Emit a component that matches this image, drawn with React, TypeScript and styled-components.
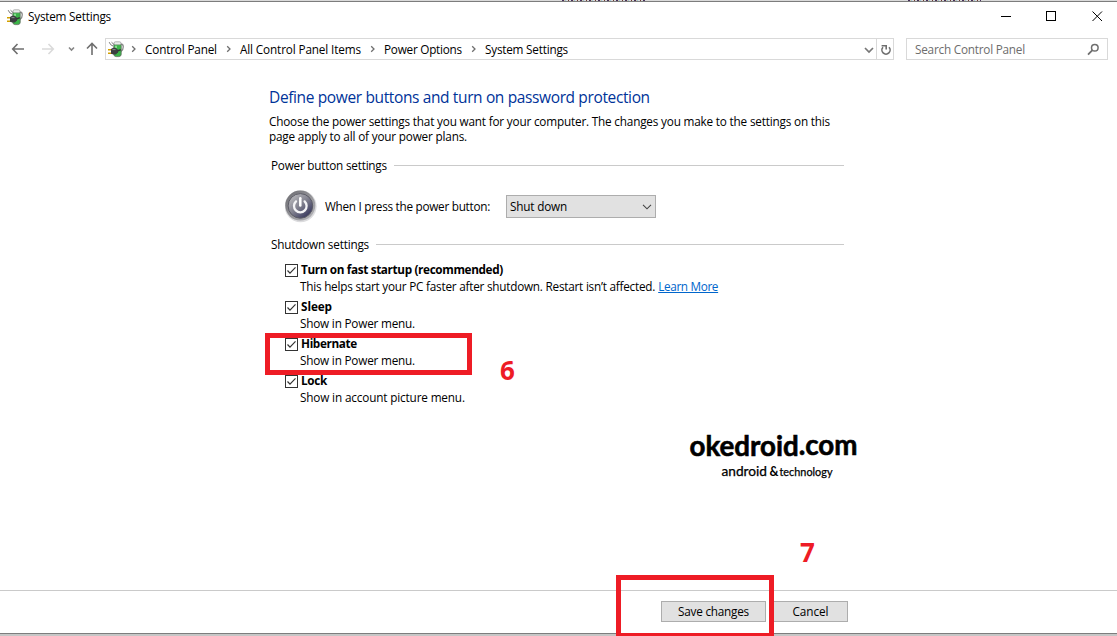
import React from "react";
import styled, {createGlobalStyle} from "styled-components";

const GlobalStyle = createGlobalStyle`
  * {
    box-sizing: border-box;
  }

  body {
    margin: 0;
    background: #fff;
    color: #000;
    font-family: "Open Sans", "Noto Sans", sans-serif;
    font-size: 11.75px;
  }
`

const Window = styled.div`
  position: relative;
  display: flex;
  flex-direction: column;
  width: 1117px;
  height: 636px;
  overflow: hidden;
  background: #fff;
`

const TopEdge = styled.div`
  flex: none;
  display: flex;
  height: 2px;
  padding-left: 562px;
  gap: 263px;
  background: #dadada;
  border-bottom: 1px solid #7d7d7d;
`

// bottoms of the letters of the window behind
const Sliver = styled.div<{ $width: number }>`
  width: ${({$width}) => $width}px;
  height: 1px;
  background: repeating-linear-gradient(90deg, #46305c 0 2px, #d8c8a8 2px 3px, #9cc4dc 3px 4px, #dadada 4px 6px, #703c30 6px 7px, #dadada 7px 9px);
`

const Text = styled.span<{ $ls?: number }>`
  white-space: pre;
  letter-spacing: ${({$ls}) => $ls ?? -0.2}px;
`

const TitleBar = styled.header`
  flex: none;
  display: flex;
  align-items: center;
  height: 30px;
  padding-left: 7px;
`

const TitleText = styled(Text)`
  flex: 1;
  margin-left: 4px;
  padding-bottom: 2px;
`

const WindowButtons = styled.div`
  display: flex;
  margin-right: -1px;

  svg {
    display: block;
    width: 46px;
    height: 28px;
    fill: none;
    stroke: #000;
  }
`

const NavBar = styled.nav`
  flex: none;
  display: flex;
  align-items: center;
  height: 22px;
  margin-top: 6px;
  padding-right: 9px;
`

const NavArrows = styled.div`
  width: 105px;
  height: 22px;
`

const AddressBar = styled.div`
  display: flex;
  align-items: center;
  width: 789px;
  height: 22px;
  padding-left: 2px;
  border: 1px solid #d9d9d9;
`

const Crumb = styled.div<{ $width: number }>`
  display: flex;
  align-items: center;
  width: ${({$width}) => $width}px;

  svg {
    flex: none;
    margin-right: 8px;
  }

  span {
    padding-bottom: 1px;
  }
`

const AddressTools = styled.div`
  display: flex;
  margin-left: auto;
`

const SearchBox = styled.div`
  display: flex;
  align-items: center;
  justify-content: space-between;
  width: 202px;
  height: 22px;
  margin-left: 12px;
  padding: 0 7px 0 8px;
  border: 1px solid #d9d9d9;
  color: #6d6d6d;

  span {
    padding-bottom: 1px;
  }
`

const Content = styled.main`
  width: 575px;
  margin: 27px 0 0 269px;
`

const Heading = styled.h1`
  margin: 0;
  color: #003399;
  font-size: 15.5px;
  font-weight: 400;
  line-height: 20px;
`

const Intro = styled.p`
  display: flex;
  flex-direction: column;
  margin: 7px 0 0;
  line-height: 15px;
`

const GroupTitle = styled.div`
  display: flex;
  align-items: center;
  height: 16px;
  margin-top: 14px;
  padding-left: 2px;

  span {
    padding-bottom: 2px;
  }

  &::after {
    content: "";
    flex: 1;
    height: 1px;
    margin: 0 0 1px 7px;
    background: #cacaca;
  }
`

const PowerRow = styled.div`
  display: flex;
  align-items: center;
  height: 34px;
  margin-top: 15px;
  padding-left: 16px;
`

const PowerLabel = styled(Text)`
  width: 181px;
  margin-left: 6px;
  padding-bottom: 1px;
`

const Select = styled.div`
  display: flex;
  align-items: center;
  justify-content: space-between;
  width: 150px;
  height: 23px;
  margin-top: 1px;
  padding: 0 3px;
  border: 1px solid #adadad;
  background: #e1e1e1;

  span {
    padding-bottom: 1px;
  }
`

const Options = styled.div`
  display: flex;
  flex-direction: column;
  gap: 3px;
  margin: 8px 0 0 16px;
`

const Option = styled.div`
  display: grid;
  grid-template-columns: 15px auto;
  line-height: 17px;

  svg {
    margin-top: 3px;
  }
`

const OptionTitle = styled(Text)`
  padding-left: 1px;
  font-weight: 700;
`

const OptionNote = styled.div`
  grid-column: 2;
`

const Link = styled.a`
  margin-left: 3px;
  color: #0066cc;
  letter-spacing: -0.34px;
  text-decoration: underline;
`

const Footer = styled.footer`
  display: flex;
  justify-content: flex-end;
  gap: 7px;
  height: 43px;
  margin-top: auto;
  padding: 10px 269px 0 0;
  border-top: 1px solid #cacaca;
`

const Button = styled.button<{ $width: number }>`
  width: ${({$width}) => $width}px;
  height: 21px;
  padding: 0;
  border: 1px solid #adadad;
  background: #e1e1e1;
  color: #000;
  font: inherit;
  line-height: 17px;
`

const BottomEdge = styled.div`
  flex: none;
  height: 3px;
  border-top: 1px solid #7d7d7d;
  background: #c6c6c6;
`

const Marker = styled.div<{ $x: number, $y: number, $w: number, $h: number }>`
  position: absolute;
  left: ${({$x}) => $x}px;
  top: ${({$y}) => $y}px;
  width: ${({$w}) => $w}px;
  height: ${({$h}) => $h}px;
  border: 5px solid #ee1c25;
`

const Step = styled.div<{ $x: number, $y: number }>`
  position: absolute;
  left: ${({$x}) => $x}px;
  top: ${({$y}) => $y}px;
  color: #ee1c25;
  font-size: 26px;
  font-weight: 700;
  line-height: 30px;
`

const Watermark = styled.svg`
  position: absolute;
  left: 686px;
  top: 426px;
  font-family: Lato, sans-serif;
`

const PlugIcon = () => (
    <svg width="17" height="17" viewBox="0 0 17 17">
        <path d="M1.2 1.2Q2.5 4.5 5 5M3.5 1.2L6 3.5" stroke="#777" strokeWidth="1" fill="none"/>
        <path d="M12.5 3C16.3 3 16 8 13 10.5" stroke="#8b8b8b" strokeWidth="1.3" fill="none"/>
        <rect x="5.8" y="2" width="7.4" height="13.6" rx="2.4" fill="#3bb548" stroke="#5d6a5d" strokeWidth=".8"/>
        <rect x="6" y=".8" width="7" height="3" rx="1.4" fill="#e8ece8" stroke="#888" strokeWidth=".6"/>
        <path d="M8 4.8V7" stroke="#a5eeaa" strokeWidth="1.4"/>
        <path d="M0 8.8H4M0 12.2H4" stroke="#d2a000" strokeWidth="1.6"/>
        <path d="M3 8L5 6.8H7.5L10 8.8V11.2L8 13.4H5.5L3 12.8Z" fill="#3c3e40"/>
        <path d="M4.5 8.6H7.5" stroke="#85888a"/>
        <path d="M9.5 10L12.8 8.6" stroke="#333" strokeWidth="1.5"/>
    </svg>
)

const PowerIcon = () => (
    <svg width="34" height="34" viewBox="0 0 34 34">
        <defs>
            <linearGradient id="rim" x1="0" y1="0" x2="1" y2="1">
                <stop offset="0" stopColor="#6b6b70"/>
                <stop offset="1" stopColor="#b9b9bd"/>
            </linearGradient>
            <linearGradient id="face" x1=".1" y1=".1" x2=".8" y2=".9">
                <stop offset="0" stopColor="#b9b9bc"/>
                <stop offset=".5" stopColor="#838390"/>
                <stop offset="1" stopColor="#3b3b60"/>
            </linearGradient>
        </defs>
        <circle cx="15.6" cy="17.2" r="16" fill="#dcdcde"/>
        <circle cx="15.3" cy="16.6" r="15" fill="url(#rim)"/>
        <circle cx="15.4" cy="16.9" r="12.3" fill="url(#face)" stroke="#5c5c66"/>
        <path d="M11 12.4A6.3 6.3 0 1 0 19.6 12.4" fill="none" stroke="#f4f4f6" strokeWidth="2.3" strokeLinecap="round"/>
        <path d="M15.3 9.2V16.6" stroke="#fff" strokeWidth="2.5" strokeLinecap="round"/>
    </svg>
)

const CrumbArrow = () => (
    <svg width="6" height="8" viewBox="0 0 6 8">
        <path d="M1.2 1.2L4 4L1.2 6.8" fill="none" stroke="#6e6e6e" strokeWidth="1.3"/>
    </svg>
)

const CheckBox = () => (
    <svg width="13" height="13" viewBox="0 0 13 13">
        <rect x=".5" y=".5" width="12" height="12" fill="#fff" stroke="#333"/>
        <path d="M2.5 6.5L5 9.2L10.5 3.4" fill="none" stroke="#333" strokeWidth="1.2"/>
    </svg>
)

const crumbs = [
    {label: "Control Panel", ls: -0.17, width: 95},
    {label: "All Control Panel Items", ls: -0.14, width: 144},
    {label: "Power Options", ls: -0.24, width: 101},
    {label: "System Settings", ls: -0.22, width: 100},
]

const options = [
    {title: "Turn on fast startup (recommended)", ls: -0.36, note: "This helps start your PC faster after shutdown. Restart isn’t affected.", noteLs: -0.23, link: "Learn More"},
    {title: "Sleep", ls: -0.08, note: "Show in Power menu.", noteLs: -0.2},
    {title: "Hibernate", ls: -0.36, note: "Show in Power menu.", noteLs: -0.2},
    {title: "Lock", ls: -0.31, note: "Show in account picture menu.", noteLs: -0.15},
]

const App: React.FC = () => {
    return (
        <Window>
            <GlobalStyle/>
            <TopEdge>
                <Sliver $width={83}/>
                <Sliver $width={73}/>
            </TopEdge>
            <TitleBar>
                <PlugIcon/>
                <TitleText $ls={-0.22}>System Settings</TitleText>
                <WindowButtons>
                    <svg viewBox="0 0 46 28"><path d="M21 13.5H31"/></svg>
                    <svg viewBox="0 0 46 28"><rect x="20.5" y="8.5" width="9" height="9"/></svg>
                    <svg viewBox="0 0 46 28"><path d="M20.5 8.5L30 18M30 8.5L20.5 18"/></svg>
                </WindowButtons>
            </TitleBar>
            <NavBar>
                <NavArrows>
                    <svg width="105" height="22" fill="none" strokeWidth="1.6">
                        <path d="M24 11H13M17.5 6L12.7 11L17.5 16" stroke="#6f6f6f"/>
                        <path d="M42 11H53M48.5 6L53.3 11L48.5 16" stroke="#dadada"/>
                        <path d="M69 9.5L71.5 12L74 9.5" stroke="#868686"/>
                        <path d="M92 17V6M87 10.5L92 5.5L97 10.5" stroke="#6f6f6f"/>
                    </svg>
                </NavArrows>
                <AddressBar>
                    <Crumb $width={23}><PlugIcon/></Crumb>
                    {crumbs.map(({label, ls, width}) => (
                        <Crumb key={label} $width={width}>
                            <CrumbArrow/>
                            <Text $ls={ls}>{label}</Text>
                        </Crumb>
                    ))}
                    <AddressTools>
                        <svg width="34" height="20" viewBox="0 0 34 20" fill="none">
                            <path d="M6 9L10 13L14 9" stroke="#777" strokeWidth="1.7"/>
                            <path d="M17.5 0V20" stroke="#d9d9d9"/>
                            <path d="M30 8.2A4.1 4.1 0 1 1 24 8.2M22.6 6.7H27.2V10.6" stroke="#6f6f6f" strokeWidth="1.6"/>
                        </svg>
                    </AddressTools>
                </AddressBar>
                <SearchBox>
                    <Text $ls={-0.22}>Search Control Panel</Text>
                    <svg width="13" height="13" viewBox="0 0 13 13" fill="none" stroke="#6f6f6f">
                        <circle cx="7.8" cy="4.8" r="3.3" strokeWidth="1.5"/>
                        <path d="M5.4 7.2L1 11.6" strokeWidth="1.8"/>
                    </svg>
                </SearchBox>
            </NavBar>
            <Content>
                <Heading><Text $ls={-0.37}>Define power buttons and turn on password protection</Text></Heading>
                <Intro>
                    <Text $ls={-0.185}>Choose the power settings that you want for your computer. The changes you make to the settings on this</Text>
                    <Text $ls={-0.18}>page apply to all of your power plans.</Text>
                </Intro>
                <GroupTitle><Text $ls={-0.22}>Power button settings</Text></GroupTitle>
                <PowerRow>
                    <PowerIcon/>
                    <PowerLabel $ls={-0.27}>When I press the power button:</PowerLabel>
                    <Select>
                        <Text $ls={-0.19}>Shut down</Text>
                        <svg width="10" height="6" viewBox="0 0 10 6"><path d="M1 .8L5 4.8L9 .8" fill="none" stroke="#444" strokeWidth="1.1"/></svg>
                    </Select>
                </PowerRow>
                <GroupTitle><Text $ls={-0.2}>Shutdown settings</Text></GroupTitle>
                <Options>
                    {options.map(({title, ls, note, noteLs, link}) => (
                        <Option key={title}>
                            <CheckBox/>
                            <OptionTitle $ls={ls}>{title}</OptionTitle>
                            <OptionNote>
                                <Text $ls={noteLs}>{note}</Text>
                                {link && <Link>{link}</Link>}
                            </OptionNote>
                        </Option>
                    ))}
                </Options>
            </Content>
            <Footer>
                <Button $width={105}><Text $ls={-0.22}>Save changes</Text></Button>
                <Button $width={75}><Text $ls={-0.06}>Cancel</Text></Button>
            </Footer>
            <BottomEdge/>
            <Watermark width="176" height="56">
                <text x="3.5" y="30" fontSize="28.5" fontWeight="700" textLength="168" lengthAdjust="spacingAndGlyphs" stroke="#000" strokeWidth=".6">
                    okedroid<tspan dy="-1.5">.com</tspan>
                </text>
                <text x="35.5" y="49.5" fontSize="12.5" textLength="45.5" lengthAdjust="spacingAndGlyphs" stroke="#000" strokeWidth=".25">android</text>
                <text x="83.5" y="49.5" fontSize="12.5" fontWeight="700">&amp;</text>
                <text x="93.5" y="49.5" fontSize="11" textLength="53" lengthAdjust="spacingAndGlyphs" stroke="#000" strokeWidth=".25">technology</text>
            </Watermark>
            <Marker $x={265} $y={333} $w={207} $h={42}/>
            <Marker $x={616} $y={575} $w={158} $h={63}/>
            <Step $x={500} $y={355}>6</Step>
            <Step $x={800} $y={537}>7</Step>
        </Window>
    );
};

export default App;
